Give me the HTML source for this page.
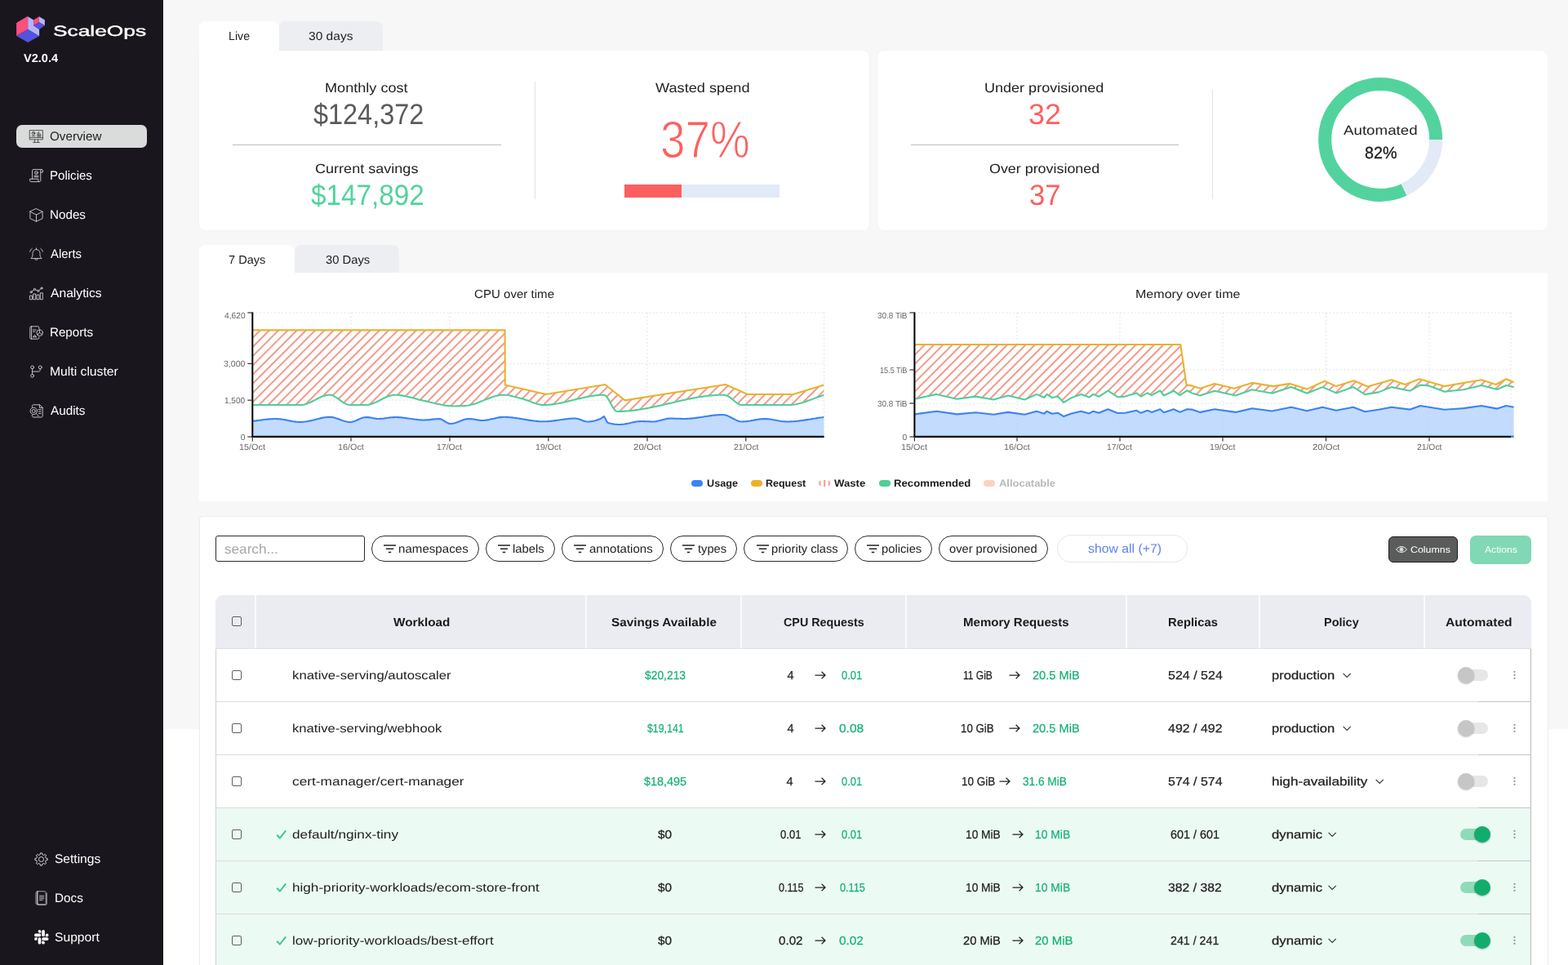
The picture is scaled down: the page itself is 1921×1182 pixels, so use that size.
<!DOCTYPE html>
<html lang="en"><head><meta charset="utf-8"><title>ScaleOps</title>
<style>
*{box-sizing:border-box;margin:0;padding:0}
html,body{width:1921px;height:1182px;overflow:hidden;background:#fff}
body{position:relative;font-family:"Liberation Sans", sans-serif;color:#222}
.t{position:absolute;white-space:pre;line-height:1;transform-origin:0 50%;text-rendering:geometricPrecision}
.a{position:absolute}
#app{position:absolute;left:0;top:0;width:1921px;height:1182px;will-change:transform}
#bg{left:201px;top:0;width:1720px;height:893px;background:#f7f7f7}
#side{left:0;top:0;width:200px;height:1182px;background:#19171d}
.card{background:#fff;border-radius:8px;box-shadow:0 0 2px rgba(0,0,0,.05)}
.tab{border-radius:8px 8px 0 0}
.chip{border:1px solid #2b2b2b;border-radius:16px;height:32px;top:656px;background:#fff}
.cb{width:12px;height:12px;border:1px solid #5e5e5e;border-radius:2px;background:transparent}
.row{left:264px;width:1612px;height:65px;border-left:1px solid #cfcfcf;border-right:1px solid #b9b9b9;border-bottom:1px solid #dcdcdc;background:#fff}
.row.g{background:#ecfaf4}
.sep{top:729px;width:2px;height:65px;background:#f9fafc}
svg{position:absolute;overflow:visible}
</style></head>
<body>
<div id="app">
<div id="bg" class="a"></div>
<div id="side" class="a"></div>
<svg style="left:19px;top:19px" width="37" height="34" viewBox="0 0 37 34">
<polygon points="1.1,9.1 14.6,1 15.2,1.3 15.2,17.1 1.1,25" fill="#fb4f7e"/>
<polygon points="15.2,1.3 22.1,5.6 22.1,12.2 29.1,16.9 29.1,25.2 15.2,17.1" fill="#b6b3fd"/>
<polygon points="1.1,25 15.2,17.1 29.1,25.2 15.2,33" fill="#5452e0"/>
<polygon points="22.1,5.6 28.9,1.2 28.9,8.3 22.1,12.2" fill="#fb4f7e"/>
<polygon points="28.9,1.2 35.9,5.4 35.9,12.2 28.9,8.3" fill="#b6b3fd"/>
<polygon points="22.1,12.2 28.9,8.3 35.9,12.2 29.1,16.9" fill="#5452e0"/>
</svg>
<div class="t" style="left:64.92px;top:30px;font-size:17.9px;transform:scaleX(1.4703);color:#fff;-webkit-text-stroke:0.4px #fff;">ScaleOps</div>
<div class="t" style="left:28.56px;top:65px;font-size:14.3px;transform:scaleX(1.0165);font-weight:700;color:#fff;">V2.0.4</div>
<div class="a" style="left:20px;top:153px;width:160px;height:28px;border-radius:7px;background:#dadbdb"></div>
<svg style="left:36px;top:158.5px" width="17" height="17" viewBox="0 0 17 17" fill="none" stroke="#444" stroke-width="0.900" stroke-linejoin="round" stroke-linecap="round"><rect x="0.6" y="0.6" width="15.8" height="11.3"/><path d="M0.6 9.6H16.4M6.5 12v3M10.5 12v3M4.6 15.4h7.8"/><circle cx="5" cy="4.3" r="1.9"/><path d="M5 3.2v1.3h1M3 7.7h4M10 6.8V3.4M11.6 6.8V2.6M13.2 6.8V4.6M9.6 6.9h4.6M9.8 8.2h4"/></svg>
<div class="t" style="left:61.30px;top:160px;font-size:15.3px;transform:scaleX(0.9950);">Overview</div>
<svg style="left:36px;top:206.5px" width="17" height="17" viewBox="0 0 17 17" fill="none" stroke="#d2d2d2" stroke-width="0.900" stroke-linejoin="round" stroke-linecap="round"><path d="M3.6 12.2V1.8c0-.8.6-1.2 1.2-1.2h10.4c.8 0 1.2.6 1.2 1.2v2.2h-2.6V14c0 1-.6 1.6-1.5 1.6H2c-.9 0-1.4-.6-1.4-1.5v-1.9h10.3V14c0 .9.5 1.5 1.3 1.5M13.8 4V1.8c0-.7.5-1.2 1.2-1.2"/><circle cx="8.5" cy="4.6" r="2"/><path d="M7.9 4.7l.5.5.9-1M6 8.4h5M6 9.9h5"/></svg>
<div class="t" style="left:61.32px;top:208px;font-size:15.3px;transform:scaleX(0.9842);color:#fff;">Policies</div>
<svg style="left:36px;top:254.5px" width="17" height="17" viewBox="0 0 17 17" fill="none" stroke="#d2d2d2" stroke-width="0.900" stroke-linejoin="round" stroke-linecap="round"><path d="M8.5 0.7l7.6 3.6v8.3l-7.6 3.7-7.6-3.7V4.3zM0.9 4.3l7.6 3.8 7.6-3.8M8.5 8.1v8.2"/></svg>
<div class="t" style="left:61.23px;top:256px;font-size:15.3px;transform:scaleX(0.9940);color:#fff;">Nodes</div>
<svg style="left:36px;top:302.5px" width="17" height="17" viewBox="0 0 17 17" fill="none" stroke="#d2d2d2" stroke-width="0.900" stroke-linejoin="round" stroke-linecap="round"><path d="M2.2 13.3c1.3-1.2 1.8-2.6 1.8-4.6V7.4C4 4.6 5.9 2.6 8.5 2.6s4.500 2 4.500 4.800v1.300c0 2 .5 3.400 1.800 4.600zM6.700 13.500c0 1.100.8 1.900 1.800 1.900s1.800-.8 1.800-1.900M8.500 2.600V.9M3.300 1.300C1.900 2.300 1 3.700.7 5.300M13.700 1.300c1.400 1 2.300 2.400 2.600 4"/></svg>
<div class="t" style="left:62.27px;top:304px;font-size:15.3px;transform:scaleX(0.9724);color:#fff;">Alerts</div>
<svg style="left:36px;top:350.5px" width="17" height="17" viewBox="0 0 17 17" fill="none" stroke="#d2d2d2" stroke-width="0.900" stroke-linejoin="round" stroke-linecap="round"><rect x="0.8" y="11.200" width="2.600" height="4.600"/><rect x="5.100" y="9" width="2.600" height="6.800"/><rect x="9.400" y="10.200" width="2.600" height="5.600"/><rect x="13.700" y="7.800" width="2.600" height="8"/><circle cx="2.100" cy="6.800" r="1.100"/><circle cx="6.400" cy="3.300" r="1.100"/><circle cx="10.700" cy="5.400" r="1.100"/><circle cx="15" cy="2" r="1.100"/><path d="M2.900 6.100l2.700-2.100M7.400 3.800l2.300 1.100M11.600 4.700l2.600-2.100"/></svg>
<div class="t" style="left:62.23px;top:352px;font-size:15.3px;transform:scaleX(1.0233);color:#fff;">Analytics</div>
<svg style="left:36px;top:398.5px" width="17" height="17" viewBox="0 0 17 17" fill="none" stroke="#d2d2d2" stroke-width="0.900" stroke-linejoin="round" stroke-linecap="round"><path d="M11.800 3.800V2.200c0-.8-.6-1.400-1.400-1.400H2.200C1.400.8.800 1.400.800 2.200v12.600c0 .8.600 1.400 1.400 1.400h8.200c.8 0 1.400-.6 1.400-1.400v-1.300M2.600.8v15.400"/><circle cx="12.600" cy="8.600" r="3.700"/><path d="M12.600 4.900v3.700l2.800 2.300M12.600 8.600l-3 2.100M4.500 5h3.600M4.500 7.200h2.600M4.500 13.800h4.200M5 13.600l1.600-2.400 1.500 2.400"/></svg>
<div class="t" style="left:61.31px;top:400px;font-size:15.3px;transform:scaleX(0.9904);color:#fff;">Reports</div>
<svg style="left:36px;top:446.5px" width="17" height="17" viewBox="0 0 17 17" fill="none" stroke="#d2d2d2" stroke-width="0.900" stroke-linejoin="round" stroke-linecap="round"><circle cx="3.600" cy="2.900" r="1.900"/><circle cx="3.600" cy="13.300" r="1.900"/><circle cx="13.200" cy="2.900" r="1.900"/><path d="M3.600 4.800v6.600M13.200 4.800v1.400c0 1-.8 1.900-1.900 1.900H3.600"/></svg>
<div class="t" style="left:61.03px;top:448px;font-size:15.3px;transform:scaleX(1.0269);color:#fff;">Multi cluster</div>
<svg style="left:36px;top:494.5px" width="17" height="17" viewBox="0 0 17 17" fill="none" stroke="#d2d2d2" stroke-width="0.900" stroke-linejoin="round" stroke-linecap="round"><path d="M3.400 3.600V2.400c0-.9.700-1.600 1.600-1.600h7.600l3.600 3.400v10.200c0 .9-.7 1.600-1.600 1.600H5c-.9 0-1.600-.7-1.600-1.600v-1M12.400.8v3.600h3.800M11 6.600h3.200M11.400 9h2.800M11.400 11.400h2.800"/><circle cx="5.300" cy="8.400" r="4.200"/><circle cx="5.300" cy="8.400" r="2"/><path d="M8.300 11.500l3 3.200"/></svg>
<div class="t" style="left:62.16px;top:496px;font-size:15.3px;transform:scaleX(0.9992);color:#fff;">Audits</div>
<svg style="left:42px;top:1043.500px" width="17" height="17" viewBox="0 0 17 17" fill="none" stroke="#d8d8d8" stroke-width="1" stroke-linejoin="round"><path d="M14.24 7.12L16.13 7.47L16.13 9.53L14.24 9.88L13.53 11.58L14.62 13.17L13.17 14.62L11.58 13.53L9.88 14.24L9.53 16.13L7.47 16.13L7.12 14.24L5.42 13.53L3.83 14.62L2.38 13.17L3.47 11.58L2.76 9.88L0.87 9.53L0.87 7.47L2.76 7.12L3.47 5.42L2.38 3.83L3.83 2.38L5.42 3.47L7.12 2.76L7.47 0.87L9.53 0.87L9.88 2.76L11.58 3.47L13.17 2.38L14.62 3.83L13.53 5.42Z"/><circle cx="8.500" cy="8.500" r="3"/></svg>
<svg style="left:43px;top:1091px" width="16" height="18" viewBox="0 0 16 18" fill="none" stroke="#cfcfcf" stroke-width="0.800" stroke-linejoin="round" stroke-linecap="round"><path d="M3 .8h8.600c.9 0 1.600.7 1.600 1.600v12.800c0 .9-.7 1.600-1.600 1.600H3zM3 .8C1.700 1.200 1 2 1 3.200v12c0 .9.700 1.600 2 1.600M3 .8v16M14.200 3v13.400c0 .5-.4.900-.9.900H4M5.500 6.200h5.200M5.500 8h5.200M5.500 9.800h5.200M5.500 11.600h3.500"/></svg>
<svg style="left:42px;top:1139px" width="17.500" height="17.500" viewBox="0 0 24 24" fill="#fff"><path d="M5.040 15.170a2.530 2.530 0 0 1-2.520 2.520A2.530 2.530 0 0 1 0 15.170a2.530 2.530 0 0 1 2.520-2.520h2.520zm1.270 0a2.530 2.530 0 0 1 2.520-2.520 2.530 2.530 0 0 1 2.520 2.520v6.310A2.530 2.530 0 0 1 8.830 24a2.530 2.530 0 0 1-2.520-2.520zM8.830 5.040a2.530 2.530 0 0 1-2.520-2.520A2.530 2.530 0 0 1 8.830 0a2.530 2.530 0 0 1 2.520 2.520v2.520zm0 1.270a2.530 2.530 0 0 1 2.520 2.520 2.530 2.530 0 0 1-2.520 2.520H2.520A2.530 2.530 0 0 1 0 8.830a2.530 2.530 0 0 1 2.520-2.520zM18.960 8.830a2.530 2.530 0 0 1 2.520-2.520A2.530 2.530 0 0 1 24 8.830a2.530 2.530 0 0 1-2.520 2.520h-2.520zm-1.270 0a2.530 2.530 0 0 1-2.520 2.520 2.530 2.530 0 0 1-2.520-2.520V2.520A2.530 2.530 0 0 1 15.170 0a2.530 2.530 0 0 1 2.520 2.520zM15.170 18.960a2.530 2.530 0 0 1 2.520 2.520A2.530 2.530 0 0 1 15.170 24a2.530 2.530 0 0 1-2.520-2.520v-2.520zm0-1.270a2.530 2.530 0 0 1-2.520-2.520 2.530 2.530 0 0 1 2.520-2.520h6.310A2.530 2.530 0 0 1 24 15.170a2.530 2.530 0 0 1-2.520 2.520z"/></svg>
<div class="t" style="left:67.06px;top:1045px;font-size:15.3px;transform:scaleX(1.0165);color:#fff;">Settings</div>
<div class="t" style="left:66.76px;top:1093px;font-size:15.3px;transform:scaleX(0.9995);color:#fff;">Docs</div>
<div class="t" style="left:67.04px;top:1141px;font-size:15.3px;transform:scaleX(1.0238);color:#fff;">Support</div>
<div class="a tab" style="left:342px;top:26px;width:127px;height:36px;background:#edeef2"></div>
<div class="a card" style="left:244px;top:62px;width:821px;height:220px;border-top-left-radius:0"></div>
<div class="a card" style="left:1075px;top:62px;width:821px;height:220px"></div>
<div class="a tab" style="left:244px;top:26px;width:98px;height:40px;background:#fff"></div>
<div class="t" style="left:279.51px;top:38px;font-size:14.4px;transform:scaleX(0.9855);">Live</div>
<div class="t" style="left:378.01px;top:38px;font-size:14.4px;transform:scaleX(1.0802);">30 days</div>
<div class="t" style="left:397.60px;top:100px;font-size:16.3px;transform:scaleX(1.1122);">Monthly cost</div>
<div class="t" style="left:384.09px;top:123px;font-size:35.6px;transform:scaleX(0.9118);color:#5a5a5a;">$124,372</div>
<div class="a" style="left:285px;top:177px;width:328.500px;height:1px;background:#bdbdbd"></div>
<div class="t" style="left:386.22px;top:199px;font-size:16.3px;transform:scaleX(1.1089);">Current savings</div>
<div class="t" style="left:381.20px;top:222px;font-size:35.6px;transform:scaleX(0.9358);color:#52d39d;">$147,892</div>
<div class="a" style="left:654.500px;top:100px;width:1.500px;height:144px;background:#e2e2e2"></div>
<div class="t" style="left:803.03px;top:100px;font-size:16.3px;transform:scaleX(1.1169);">Wasted spend</div>
<div class="t" style="left:808.84px;top:139px;font-size:64px;transform:scaleX(0.8568);color:#ff5f5f;-webkit-text-stroke:1.2px #fff;">37%</div>
<div class="a" style="left:765px;top:226px;width:190px;height:16px;background:#e2eaf8"></div>
<div class="a" style="left:765px;top:226px;width:70px;height:16px;background:#fc5f5f"></div>
<div class="t" style="left:1206.27px;top:100px;font-size:16.3px;transform:scaleX(1.1071);">Under provisioned</div>
<div class="t" style="left:1260.22px;top:123px;font-size:35.5px;transform:scaleX(1.0084);color:#ff5f5f;">32</div>
<div class="a" style="left:1116px;top:177px;width:327.500px;height:1px;background:#bdbdbd"></div>
<div class="t" style="left:1212.20px;top:199px;font-size:16.3px;transform:scaleX(1.0982);">Over provisioned</div>
<div class="t" style="left:1261.24px;top:222px;font-size:35.5px;transform:scaleX(0.9777);color:#ff5f5f;">37</div>
<div class="a" style="left:1484.500px;top:110px;width:1.500px;height:134px;background:#e2e2e2"></div>
<svg style="left:0;top:0" width="1921" height="300"><circle cx="1691.2" cy="170.9" r="68" fill="none" stroke="#52d39d" stroke-width="16" stroke-dasharray="350.95 427.26" stroke-dashoffset="-76.61"/><circle cx="1691.2" cy="170.9" r="68" fill="none" stroke="#e2eaf8" stroke-width="16" stroke-dasharray="76.91 427.26"/></svg>
<div class="t" style="left:1646.01px;top:152px;font-size:16.3px;transform:scaleX(1.1506);">Automated</div>
<div class="t" style="left:1672.39px;top:178px;font-size:20.5px;transform:scaleX(0.9607);-webkit-text-stroke:0.35px #222;">82%</div>
<div class="a tab" style="left:361px;top:300px;width:128px;height:34px;background:#edeef2"></div>
<div class="a tab" style="left:244px;top:300px;width:117px;height:38px;background:#fff"></div>
<div class="a" style="left:244px;top:334px;width:1652px;height:280px;background:#fff"></div>
<div class="t" style="left:280.30px;top:312px;font-size:14.4px;transform:scaleX(1.0114);">7 Days</div>
<div class="t" style="left:398.61px;top:312px;font-size:14.4px;transform:scaleX(1.0278);">30 Days</div>
<div class="t" style="left:580.96px;top:354px;font-size:14.4px;transform:scaleX(1.0480);">CPU over time</div>
<div class="t" style="left:1390.58px;top:354px;font-size:14.4px;transform:scaleX(1.1153);">Memory over time</div>
<svg style="left:0;top:0" width="10" height="10"><defs><pattern id="hatch" width="7.950" height="7.950" patternUnits="userSpaceOnUse" patternTransform="translate(2.500 0) rotate(45)"><rect x="0" y="0" width="1.750" height="7.950" fill="#f28c7a"/></pattern></defs></svg>
<svg style="left:0;top:0" width="1921" height="620"><path d="M309.0 515.8L311.1 515.6L313.1 515.4L315.2 515.1L317.3 514.8L319.4 514.6L321.4 514.3L323.5 514.0L325.6 513.8L327.6 513.6L329.7 513.4L331.8 513.2L333.9 513.1L335.9 513.0L338.0 513.0L340.0 513.1L342.0 513.2L344.0 513.4L346.0 513.7L348.0 514.0L350.0 514.4L352.0 514.8L354.0 515.2L356.0 515.6L358.0 516.0L360.0 516.3L362.0 516.6L364.0 516.8L366.0 516.9L368.0 517.0L370.0 516.9L372.0 516.8L374.0 516.5L376.0 516.2L378.0 515.8L380.0 515.4L382.0 514.9L384.0 514.4L386.0 513.9L388.0 513.4L390.0 512.9L392.0 512.4L394.0 512.0L396.0 511.6L398.0 511.3L400.0 511.0L402.0 510.9L404.0 510.8L406.1 510.9L408.2 511.3L410.2 511.8L412.3 512.4L414.4 513.1L416.5 513.9L418.6 514.7L420.7 515.4L422.8 516.0L424.8 516.5L426.9 516.9L429.0 517.0L431.2 516.8L433.3 516.2L435.5 515.4L437.7 514.5L439.8 513.5L442.0 512.6L444.2 511.8L446.3 511.2L448.5 511.0L450.7 511.1L452.9 511.4L455.1 511.8L457.4 512.2L459.6 512.6L461.8 512.9L464.0 513.0L466.0 512.9L468.0 512.8L470.0 512.6L472.0 512.3L474.0 512.0L476.0 511.7L478.0 511.4L480.0 511.2L482.0 511.1L484.0 511.0L486.0 511.0L488.0 511.1L490.0 511.3L492.0 511.4L494.0 511.7L496.0 511.9L498.0 512.2L500.0 512.5L502.0 512.8L504.0 513.0L506.0 513.3L508.0 513.6L510.0 513.8L512.0 514.1L514.0 514.2L516.0 514.4L518.0 514.5L520.0 514.5L522.0 514.4L524.0 514.3L526.0 514.1L528.0 513.9L530.0 513.6L532.0 513.4L534.0 513.2L536.0 513.1L538.0 513.0L540.3 513.4L542.5 514.6L544.8 516.0L547.1 517.4L549.3 518.6L551.6 519.0L553.7 518.9L555.8 518.5L557.9 517.9L560.0 517.2L562.1 516.4L564.1 515.6L566.2 514.8L568.3 514.1L570.4 513.5L572.5 513.1L574.6 513.0L576.6 513.1L578.7 513.3L580.8 513.6L582.8 514.0L584.9 514.4L586.9 514.7L589.0 514.9L591.0 515.0L593.0 514.9L595.0 514.7L597.0 514.4L599.0 514.1L601.0 513.6L603.0 513.1L605.0 512.7L607.0 512.2L609.0 511.7L611.0 511.4L613.0 511.1L615.0 510.9L617.0 510.8L619.0 510.8L621.1 510.9L623.1 511.0L625.2 511.2L627.2 511.4L629.2 511.7L631.3 511.9L633.3 512.2L635.4 512.5L637.4 512.9L639.5 513.2L641.5 513.5L643.5 513.9L645.6 514.2L647.6 514.6L649.7 514.9L651.7 515.2L653.8 515.4L655.8 515.7L657.8 515.9L659.9 516.1L661.9 516.2L664.0 516.3L666.0 516.3L668.0 516.3L670.1 516.2L672.1 516.0L674.1 515.9L676.2 515.6L678.2 515.4L680.2 515.1L682.3 514.8L684.3 514.5L686.3 514.3L688.3 514.0L690.4 513.7L692.4 513.4L694.4 513.2L696.5 512.9L698.5 512.8L700.5 512.6L702.6 512.5L704.6 512.5L706.8 512.7L709.0 513.3L711.2 514.1L713.4 514.9L715.6 515.7L717.8 516.3L720.0 516.5L722.3 516.4L724.5 516.2L726.8 515.7L729.0 515.2L731.3 514.6L733.5 513.8L735.8 513.0L737.9 511.3L740.0 510.0L742.0 513.6L744.0 517.5L746.1 518.2L748.2 518.8L750.3 519.2L752.5 519.6L754.6 519.8L756.7 520.0L758.8 520.0L760.9 519.9L763.0 519.7L765.0 519.5L767.1 519.1L769.2 518.7L771.3 518.2L773.3 517.8L775.4 517.3L777.5 516.9L779.6 516.5L781.6 516.3L783.7 516.1L785.8 516.0L787.8 516.0L789.9 516.1L791.9 516.2L793.9 516.3L795.9 516.4L798.0 516.5L800.0 516.5L802.1 516.4L804.2 516.1L806.3 515.6L808.4 515.1L810.5 514.5L812.6 513.9L814.7 513.4L816.8 512.9L818.9 512.6L821.0 512.5L823.1 512.5L825.2 512.6L827.4 512.7L829.5 512.8L831.6 512.8L833.8 512.9L835.9 513.0L838.0 513.0L840.1 513.0L842.2 512.9L844.2 512.8L846.3 512.6L848.4 512.4L850.5 512.2L852.5 511.9L854.6 511.6L856.7 511.3L858.8 511.0L860.9 510.7L862.9 510.3L865.0 510.0L867.1 509.7L869.2 509.4L871.3 509.1L873.3 508.8L875.4 508.6L877.5 508.4L879.6 508.2L881.6 508.1L883.7 508.0L885.8 508.0L887.9 508.2L890.0 508.7L892.0 509.6L894.1 510.6L896.2 511.7L898.3 512.8L900.4 513.9L902.5 514.9L904.5 515.8L906.6 516.3L908.7 516.5L910.7 516.4L912.7 516.3L914.8 516.1L916.8 515.8L918.8 515.5L920.8 515.1L922.9 514.8L924.9 514.4L926.9 514.0L928.9 513.7L930.9 513.4L933.0 513.2L935.0 513.1L937.0 513.0L939.1 513.1L941.2 513.2L943.2 513.5L945.3 513.8L947.4 514.2L949.5 514.5L951.5 515.0L953.6 515.3L955.7 515.7L957.8 516.0L959.8 516.3L961.9 516.4L964.0 516.5L966.1 516.5L968.1 516.4L970.2 516.3L972.2 516.2L974.3 516.0L976.4 515.8L978.4 515.6L980.5 515.3L982.5 515.0L984.6 514.7L986.6 514.4L988.7 514.1L990.8 513.8L992.8 513.5L994.9 513.1L996.9 512.8L999.0 512.5L1001.1 512.1L1003.1 511.8L1005.2 511.5L1007.2 511.3L1009.3 511.0L1009.3 535L309.0 535Z" fill="#c3dbfd"/><line x1="430" y1="383" x2="430" y2="535" stroke="#cfcfd6" stroke-opacity="0.75" stroke-width="1" stroke-dasharray="1.500 3"/><line x1="551" y1="383" x2="551" y2="535" stroke="#cfcfd6" stroke-opacity="0.75" stroke-width="1" stroke-dasharray="1.500 3"/><line x1="671.9" y1="383" x2="671.9" y2="535" stroke="#cfcfd6" stroke-opacity="0.75" stroke-width="1" stroke-dasharray="1.500 3"/><line x1="793" y1="383" x2="793" y2="535" stroke="#cfcfd6" stroke-opacity="0.75" stroke-width="1" stroke-dasharray="1.500 3"/><line x1="913.8" y1="383" x2="913.8" y2="535" stroke="#cfcfd6" stroke-opacity="0.75" stroke-width="1" stroke-dasharray="1.500 3"/><line x1="1009.6" y1="383" x2="1009.6" y2="535" stroke="#cfcfd6" stroke-opacity="0.75" stroke-width="1" stroke-dasharray="1.500 3"/><line x1="309.3" y1="383" x2="1009.6" y2="383" stroke="#cfcfd6" stroke-opacity="0.75" stroke-width="1" stroke-dasharray="1.500 3"/><line x1="309.3" y1="445.4" x2="1009.6" y2="445.4" stroke="#cfcfd6" stroke-opacity="0.75" stroke-width="1" stroke-dasharray="1.500 3"/><line x1="309.3" y1="490.2" x2="1009.6" y2="490.2" stroke="#cfcfd6" stroke-opacity="0.75" stroke-width="1" stroke-dasharray="1.500 3"/><path d="M309.0 404.4L618.6 404.4L618.8 471.4L669.0 483.0L741.4 471.0L765.6 490.4L888.8 471.0L916.0 483.0L972.0 483.0L1009.3 471.4L1009.3 484.0L1007.3 484.6L1005.3 485.2L1003.3 485.9L1001.2 486.6L999.2 487.4L997.2 488.1L995.2 488.9L993.2 489.6L991.2 490.4L989.2 491.1L987.1 491.9L985.1 492.5L983.1 493.2L981.1 493.8L979.1 494.3L977.1 494.8L975.1 495.2L973.0 495.5L971.0 495.8L969.0 495.9L967.0 496.0L965.0 496.0L963.0 496.0L961.0 496.0L959.0 496.0L956.9 496.0L954.9 496.0L952.9 496.0L950.9 496.0L948.9 496.0L946.9 496.0L944.9 496.0L942.9 496.0L940.9 496.0L938.9 496.0L936.8 496.0L934.8 496.0L932.8 496.0L930.8 496.0L928.8 496.0L926.8 496.0L924.8 496.0L922.8 496.0L920.8 496.0L918.8 496.0L916.7 496.0L914.7 496.0L912.7 496.0L910.7 496.0L908.7 496.0L906.6 495.7L904.5 494.7L902.5 493.4L900.4 491.7L898.3 490.0L896.2 488.2L894.2 486.6L892.1 485.3L890.0 484.5L887.9 484.0L885.8 483.7L883.8 483.7L881.7 483.8L879.7 483.8L877.7 483.9L875.7 484.1L873.6 484.2L871.6 484.4L869.6 484.6L867.5 484.8L865.5 485.0L863.5 485.3L861.5 485.6L859.4 485.9L857.4 486.2L855.4 486.5L853.3 486.9L851.3 487.2L849.3 487.6L847.3 488.0L845.2 488.4L843.2 488.8L841.2 489.2L839.2 489.7L837.1 490.1L835.1 490.6L833.1 491.0L831.0 491.5L829.0 492.0L827.0 492.4L825.0 492.9L822.9 493.4L820.9 493.9L818.9 494.3L816.8 494.8L814.8 495.3L812.8 495.7L810.8 496.2L808.7 496.7L806.7 497.1L804.7 497.6L802.6 498.0L800.6 498.5L798.6 498.9L796.6 499.3L794.5 499.7L792.5 500.1L790.5 500.5L788.5 500.8L786.4 501.2L784.4 501.5L782.4 501.8L780.3 502.1L778.3 502.4L776.3 502.7L774.3 502.9L772.2 503.1L770.2 503.3L768.2 503.5L766.1 503.6L764.1 503.8L762.1 503.9L760.1 503.9L758.0 504.0L756.0 504.0L754.0 503.1L752.0 500.8L750.0 497.6L748.0 493.9L746.0 490.1L744.0 486.9L742.0 484.6L740.0 483.7L738.0 483.7L736.0 483.8L734.0 483.9L732.0 484.1L730.0 484.3L728.0 484.6L726.0 484.9L724.0 485.2L722.0 485.5L720.0 485.9L718.0 486.3L716.0 486.7L714.0 487.2L712.0 487.7L710.0 488.1L708.0 488.6L706.0 489.1L704.0 489.6L702.0 490.1L700.0 490.6L698.0 491.1L696.0 491.6L694.0 492.0L692.0 492.5L690.0 493.0L688.0 493.4L686.0 493.8L684.0 494.2L682.0 494.5L680.0 494.8L678.0 495.1L676.0 495.4L674.0 495.6L672.0 495.8L670.0 495.9L668.0 496.0L666.0 496.0L664.0 495.9L662.0 495.6L660.0 495.2L658.0 494.7L656.0 494.1L654.0 493.4L652.0 492.7L650.0 491.9L648.0 491.1L646.0 490.4L644.0 489.7L642.0 489.0L640.0 488.5L637.9 488.0L635.8 487.4L633.7 486.8L631.6 486.2L629.5 485.7L627.5 485.1L625.4 484.7L623.3 484.3L621.2 484.0L619.1 483.8L617.0 483.7L615.0 483.8L612.9 484.0L610.9 484.3L608.8 484.7L606.8 485.2L604.7 485.8L602.7 486.5L600.7 487.2L598.6 488.0L596.6 488.8L594.5 489.6L592.5 490.4L590.4 491.3L588.4 492.1L586.3 492.9L584.3 493.7L582.3 494.4L580.2 495.0L578.2 495.6L576.1 496.1L574.1 496.5L572.0 496.8L570.0 497.0L568.0 497.1L565.9 497.2L563.9 497.3L561.9 497.4L559.9 497.4L557.8 497.5L555.8 497.5L553.7 497.5L551.6 497.3L549.5 497.1L547.4 496.9L545.3 496.6L543.2 496.2L541.1 495.8L539.0 495.3L536.8 494.9L534.7 494.4L532.6 493.9L530.5 493.4L528.4 492.9L526.3 492.4L524.2 491.9L522.1 491.4L520.0 491.0L518.0 490.6L516.0 490.1L514.0 489.7L512.0 489.2L510.0 488.6L508.0 488.1L506.0 487.5L504.0 487.0L501.9 486.5L499.9 486.0L497.9 485.5L495.9 485.1L493.9 484.7L491.9 484.4L489.9 484.1L487.9 483.9L485.9 483.7L483.9 483.7L481.8 483.8L479.7 484.2L477.6 484.7L475.5 485.4L473.5 486.3L471.4 487.2L469.3 488.2L467.2 489.3L465.1 490.4L463.0 491.5L460.9 492.5L458.8 493.4L456.8 494.3L454.7 495.0L452.6 495.5L450.5 495.9L448.4 496.0L446.2 496.0L444.0 496.0L441.8 496.0L439.6 496.0L437.5 496.0L435.3 496.0L433.1 496.0L430.9 496.0L428.7 496.0L426.6 495.8L424.5 495.1L422.4 494.1L420.4 492.8L418.3 491.4L416.2 489.9L414.1 488.3L412.0 486.9L409.9 485.6L407.9 484.6L405.8 483.9L403.7 483.7L401.6 483.8L399.5 484.2L397.5 484.7L395.4 485.4L393.3 486.3L391.2 487.2L389.1 488.2L387.0 489.3L385.0 490.4L382.9 491.5L380.8 492.5L378.7 493.4L376.6 494.3L374.5 495.0L372.5 495.5L370.4 495.9L368.3 496.0L366.3 496.0L364.2 496.0L362.2 496.0L360.1 496.0L358.1 496.0L356.0 496.0L354.0 496.0L351.9 496.0L349.9 496.0L347.9 496.0L345.8 496.0L343.8 496.0L341.7 496.0L339.7 496.0L337.6 496.0L335.6 496.0L333.5 496.0L331.5 496.0L329.4 496.0L327.4 496.0L325.4 496.0L323.3 496.0L321.3 496.0L319.2 496.0L317.2 496.0L315.1 496.0L313.1 496.0L311.0 496.0L309.0 496.0Z" fill="url(#hatch)"/><path d="M309.0 496.0L311.0 496.0L313.1 496.0L315.1 496.0L317.2 496.0L319.2 496.0L321.3 496.0L323.3 496.0L325.4 496.0L327.4 496.0L329.4 496.0L331.5 496.0L333.5 496.0L335.6 496.0L337.6 496.0L339.7 496.0L341.7 496.0L343.8 496.0L345.8 496.0L347.9 496.0L349.9 496.0L351.9 496.0L354.0 496.0L356.0 496.0L358.1 496.0L360.1 496.0L362.2 496.0L364.2 496.0L366.3 496.0L368.3 496.0L370.4 495.9L372.5 495.5L374.5 495.0L376.6 494.3L378.7 493.4L380.8 492.5L382.9 491.5L385.0 490.4L387.0 489.3L389.1 488.2L391.2 487.2L393.3 486.3L395.4 485.4L397.5 484.7L399.5 484.2L401.6 483.8L403.7 483.7L405.8 483.9L407.9 484.6L409.9 485.6L412.0 486.9L414.1 488.3L416.2 489.9L418.3 491.4L420.4 492.8L422.4 494.1L424.5 495.1L426.6 495.8L428.7 496.0L430.9 496.0L433.1 496.0L435.3 496.0L437.5 496.0L439.6 496.0L441.8 496.0L444.0 496.0L446.2 496.0L448.4 496.0L450.5 495.9L452.6 495.5L454.7 495.0L456.8 494.3L458.8 493.4L460.9 492.5L463.0 491.5L465.1 490.4L467.2 489.3L469.3 488.2L471.4 487.2L473.5 486.3L475.5 485.4L477.6 484.7L479.7 484.2L481.8 483.8L483.9 483.7L485.9 483.7L487.9 483.9L489.9 484.1L491.9 484.4L493.9 484.7L495.9 485.1L497.9 485.5L499.9 486.0L501.9 486.5L504.0 487.0L506.0 487.5L508.0 488.1L510.0 488.6L512.0 489.2L514.0 489.7L516.0 490.1L518.0 490.6L520.0 491.0L522.1 491.4L524.2 491.9L526.3 492.4L528.4 492.9L530.5 493.4L532.6 493.9L534.7 494.4L536.8 494.9L539.0 495.3L541.1 495.8L543.2 496.2L545.3 496.6L547.4 496.9L549.5 497.1L551.6 497.3L553.7 497.5L555.8 497.5L557.8 497.5L559.9 497.4L561.9 497.4L563.9 497.3L565.9 497.2L568.0 497.1L570.0 497.0L572.0 496.8L574.1 496.5L576.1 496.1L578.2 495.6L580.2 495.0L582.3 494.4L584.3 493.7L586.3 492.9L588.4 492.1L590.4 491.3L592.5 490.4L594.5 489.6L596.6 488.8L598.6 488.0L600.7 487.2L602.7 486.5L604.7 485.8L606.8 485.2L608.8 484.7L610.9 484.3L612.9 484.0L615.0 483.8L617.0 483.7L619.1 483.8L621.2 484.0L623.3 484.3L625.4 484.7L627.5 485.1L629.5 485.7L631.6 486.2L633.7 486.8L635.8 487.4L637.9 488.0L640.0 488.5L642.0 489.0L644.0 489.7L646.0 490.4L648.0 491.1L650.0 491.9L652.0 492.7L654.0 493.4L656.0 494.1L658.0 494.7L660.0 495.2L662.0 495.6L664.0 495.9L666.0 496.0L668.0 496.0L670.0 495.9L672.0 495.8L674.0 495.6L676.0 495.4L678.0 495.1L680.0 494.8L682.0 494.5L684.0 494.2L686.0 493.8L688.0 493.4L690.0 493.0L692.0 492.5L694.0 492.0L696.0 491.6L698.0 491.1L700.0 490.6L702.0 490.1L704.0 489.6L706.0 489.1L708.0 488.6L710.0 488.1L712.0 487.7L714.0 487.2L716.0 486.7L718.0 486.3L720.0 485.9L722.0 485.5L724.0 485.2L726.0 484.9L728.0 484.6L730.0 484.3L732.0 484.1L734.0 483.9L736.0 483.8L738.0 483.7L740.0 483.7L742.0 484.6L744.0 486.9L746.0 490.1L748.0 493.9L750.0 497.6L752.0 500.8L754.0 503.1L756.0 504.0L758.0 504.0L760.1 503.9L762.1 503.9L764.1 503.8L766.1 503.6L768.2 503.5L770.2 503.3L772.2 503.1L774.3 502.9L776.3 502.7L778.3 502.4L780.3 502.1L782.4 501.8L784.4 501.5L786.4 501.2L788.5 500.8L790.5 500.5L792.5 500.1L794.5 499.7L796.6 499.3L798.6 498.9L800.6 498.5L802.6 498.0L804.7 497.6L806.7 497.1L808.7 496.7L810.8 496.2L812.8 495.7L814.8 495.3L816.8 494.8L818.9 494.3L820.9 493.9L822.9 493.4L825.0 492.9L827.0 492.4L829.0 492.0L831.0 491.5L833.1 491.0L835.1 490.6L837.1 490.1L839.2 489.7L841.2 489.2L843.2 488.8L845.2 488.4L847.3 488.0L849.3 487.6L851.3 487.2L853.3 486.9L855.4 486.5L857.4 486.2L859.4 485.9L861.5 485.6L863.5 485.3L865.5 485.0L867.5 484.8L869.6 484.6L871.6 484.4L873.6 484.2L875.7 484.1L877.7 483.9L879.7 483.8L881.7 483.8L883.8 483.7L885.8 483.7L887.9 484.0L890.0 484.5L892.1 485.3L894.2 486.6L896.2 488.2L898.3 490.0L900.4 491.7L902.5 493.4L904.5 494.7L906.6 495.7L908.7 496.0L910.7 496.0L912.7 496.0L914.7 496.0L916.7 496.0L918.8 496.0L920.8 496.0L922.8 496.0L924.8 496.0L926.8 496.0L928.8 496.0L930.8 496.0L932.8 496.0L934.8 496.0L936.8 496.0L938.9 496.0L940.9 496.0L942.9 496.0L944.9 496.0L946.9 496.0L948.9 496.0L950.9 496.0L952.9 496.0L954.9 496.0L956.9 496.0L959.0 496.0L961.0 496.0L963.0 496.0L965.0 496.0L967.0 496.0L969.0 495.9L971.0 495.8L973.0 495.5L975.1 495.2L977.1 494.8L979.1 494.3L981.1 493.8L983.1 493.2L985.1 492.5L987.1 491.9L989.2 491.1L991.2 490.4L993.2 489.6L995.2 488.9L997.2 488.1L999.2 487.4L1001.2 486.6L1003.3 485.9L1005.3 485.2L1007.3 484.6L1009.3 484.0" fill="none" stroke="#4fce98" stroke-width="2.100" stroke-linejoin="round"/><path d="M309.0 404.4L618.6 404.4L618.8 471.4L669.0 483.0L741.4 471.0L765.6 490.4L888.8 471.0L916.0 483.0L972.0 483.0L1009.3 471.4" fill="none" stroke="#eab22e" stroke-width="2.100" stroke-linejoin="round"/><path d="M309.0 515.8L311.1 515.6L313.1 515.4L315.2 515.1L317.3 514.8L319.4 514.6L321.4 514.3L323.5 514.0L325.6 513.8L327.6 513.6L329.7 513.4L331.8 513.2L333.9 513.1L335.9 513.0L338.0 513.0L340.0 513.1L342.0 513.2L344.0 513.4L346.0 513.7L348.0 514.0L350.0 514.4L352.0 514.8L354.0 515.2L356.0 515.6L358.0 516.0L360.0 516.3L362.0 516.6L364.0 516.8L366.0 516.9L368.0 517.0L370.0 516.9L372.0 516.8L374.0 516.5L376.0 516.2L378.0 515.8L380.0 515.4L382.0 514.9L384.0 514.4L386.0 513.9L388.0 513.4L390.0 512.9L392.0 512.4L394.0 512.0L396.0 511.6L398.0 511.3L400.0 511.0L402.0 510.9L404.0 510.8L406.1 510.9L408.2 511.3L410.2 511.8L412.3 512.4L414.4 513.1L416.5 513.9L418.6 514.7L420.7 515.4L422.8 516.0L424.8 516.5L426.9 516.9L429.0 517.0L431.2 516.8L433.3 516.2L435.5 515.4L437.7 514.5L439.8 513.5L442.0 512.6L444.2 511.8L446.3 511.2L448.5 511.0L450.7 511.1L452.9 511.4L455.1 511.8L457.4 512.2L459.6 512.6L461.8 512.9L464.0 513.0L466.0 512.9L468.0 512.8L470.0 512.6L472.0 512.3L474.0 512.0L476.0 511.7L478.0 511.4L480.0 511.2L482.0 511.1L484.0 511.0L486.0 511.0L488.0 511.1L490.0 511.3L492.0 511.4L494.0 511.7L496.0 511.9L498.0 512.2L500.0 512.5L502.0 512.8L504.0 513.0L506.0 513.3L508.0 513.6L510.0 513.8L512.0 514.1L514.0 514.2L516.0 514.4L518.0 514.5L520.0 514.5L522.0 514.4L524.0 514.3L526.0 514.1L528.0 513.9L530.0 513.6L532.0 513.4L534.0 513.2L536.0 513.1L538.0 513.0L540.3 513.4L542.5 514.6L544.8 516.0L547.1 517.4L549.3 518.6L551.6 519.0L553.7 518.9L555.8 518.5L557.9 517.9L560.0 517.2L562.1 516.4L564.1 515.6L566.2 514.8L568.3 514.1L570.4 513.5L572.5 513.1L574.6 513.0L576.6 513.1L578.7 513.3L580.8 513.6L582.8 514.0L584.9 514.4L586.9 514.7L589.0 514.9L591.0 515.0L593.0 514.9L595.0 514.7L597.0 514.4L599.0 514.1L601.0 513.6L603.0 513.1L605.0 512.7L607.0 512.2L609.0 511.7L611.0 511.4L613.0 511.1L615.0 510.9L617.0 510.8L619.0 510.8L621.1 510.9L623.1 511.0L625.2 511.2L627.2 511.4L629.2 511.7L631.3 511.9L633.3 512.2L635.4 512.5L637.4 512.9L639.5 513.2L641.5 513.5L643.5 513.9L645.6 514.2L647.6 514.6L649.7 514.9L651.7 515.2L653.8 515.4L655.8 515.7L657.8 515.9L659.9 516.1L661.9 516.2L664.0 516.3L666.0 516.3L668.0 516.3L670.1 516.2L672.1 516.0L674.1 515.9L676.2 515.6L678.2 515.4L680.2 515.1L682.3 514.8L684.3 514.5L686.3 514.3L688.3 514.0L690.4 513.7L692.4 513.4L694.4 513.2L696.5 512.9L698.5 512.8L700.5 512.6L702.6 512.5L704.6 512.5L706.8 512.7L709.0 513.3L711.2 514.1L713.4 514.9L715.6 515.7L717.8 516.3L720.0 516.5L722.3 516.4L724.5 516.2L726.8 515.7L729.0 515.2L731.3 514.6L733.5 513.8L735.8 513.0L737.9 511.3L740.0 510.0L742.0 513.6L744.0 517.5L746.1 518.2L748.2 518.8L750.3 519.2L752.5 519.6L754.6 519.8L756.7 520.0L758.8 520.0L760.9 519.9L763.0 519.7L765.0 519.5L767.1 519.1L769.2 518.7L771.3 518.2L773.3 517.8L775.4 517.3L777.5 516.9L779.6 516.5L781.6 516.3L783.7 516.1L785.8 516.0L787.8 516.0L789.9 516.1L791.9 516.2L793.9 516.3L795.9 516.4L798.0 516.5L800.0 516.5L802.1 516.4L804.2 516.1L806.3 515.6L808.4 515.1L810.5 514.5L812.6 513.9L814.7 513.4L816.8 512.9L818.9 512.6L821.0 512.5L823.1 512.5L825.2 512.6L827.4 512.7L829.5 512.8L831.6 512.8L833.8 512.9L835.9 513.0L838.0 513.0L840.1 513.0L842.2 512.9L844.2 512.8L846.3 512.6L848.4 512.4L850.5 512.2L852.5 511.9L854.6 511.6L856.7 511.3L858.8 511.0L860.9 510.7L862.9 510.3L865.0 510.0L867.1 509.7L869.2 509.4L871.3 509.1L873.3 508.8L875.4 508.6L877.5 508.4L879.6 508.2L881.6 508.1L883.7 508.0L885.8 508.0L887.9 508.2L890.0 508.7L892.0 509.6L894.1 510.6L896.2 511.7L898.3 512.8L900.4 513.9L902.5 514.9L904.5 515.8L906.6 516.3L908.7 516.5L910.7 516.4L912.7 516.3L914.8 516.1L916.8 515.8L918.8 515.5L920.8 515.1L922.9 514.8L924.9 514.4L926.9 514.0L928.9 513.7L930.9 513.4L933.0 513.2L935.0 513.1L937.0 513.0L939.1 513.1L941.2 513.2L943.2 513.5L945.3 513.8L947.4 514.2L949.5 514.5L951.5 515.0L953.6 515.3L955.7 515.7L957.8 516.0L959.8 516.3L961.9 516.4L964.0 516.5L966.1 516.5L968.1 516.4L970.2 516.3L972.2 516.2L974.3 516.0L976.4 515.8L978.4 515.6L980.5 515.3L982.5 515.0L984.6 514.7L986.6 514.4L988.7 514.1L990.8 513.8L992.8 513.5L994.9 513.1L996.9 512.8L999.0 512.5L1001.1 512.1L1003.1 511.8L1005.2 511.5L1007.2 511.3L1009.3 511.0" fill="none" stroke="#3b82f6" stroke-width="2.100" stroke-linejoin="round"/><line x1="309.3" y1="534.7" x2="1009.3" y2="534.7" stroke="#3b82f6" stroke-width="2.600"/><line x1="309.3" y1="382.5" x2="309.3" y2="536" stroke="#000" stroke-width="2"/><line x1="308.3" y1="535" x2="1009.6" y2="535" stroke="#000" stroke-width="2"/><line x1="309.3" y1="535" x2="309.3" y2="540.5" stroke="#333" stroke-width="1.200"/><line x1="430" y1="535" x2="430" y2="540.5" stroke="#333" stroke-width="1.200"/><line x1="551" y1="535" x2="551" y2="540.5" stroke="#333" stroke-width="1.200"/><line x1="671.9" y1="535" x2="671.9" y2="540.5" stroke="#333" stroke-width="1.200"/><line x1="793" y1="535" x2="793" y2="540.5" stroke="#333" stroke-width="1.200"/><line x1="913.8" y1="535" x2="913.8" y2="540.5" stroke="#333" stroke-width="1.200"/><line x1="303.3" y1="383" x2="309.3" y2="383" stroke="#333" stroke-width="1.200"/><line x1="303.3" y1="445.4" x2="309.3" y2="445.4" stroke="#333" stroke-width="1.200"/><line x1="303.3" y1="490.2" x2="309.3" y2="490.2" stroke="#333" stroke-width="1.200"/><line x1="303.3" y1="535" x2="309.3" y2="535" stroke="#333" stroke-width="1.200"/></svg>
<div class="t" style="left:292.92px;top:544px;font-size:10.3px;transform:scaleX(1.0530);color:#666;">15/Oct</div>
<div class="t" style="left:414.00px;top:544px;font-size:10.3px;transform:scaleX(1.0502);color:#666;">16/Oct</div>
<div class="t" style="left:535.17px;top:544px;font-size:10.3px;transform:scaleX(1.0186);color:#666;">17/Oct</div>
<div class="t" style="left:656.15px;top:544px;font-size:10.3px;transform:scaleX(1.0337);color:#666;">19/Oct</div>
<div class="t" style="left:776.00px;top:544px;font-size:10.3px;transform:scaleX(1.1158);color:#666;">20/Oct</div>
<div class="t" style="left:898.70px;top:544px;font-size:10.3px;transform:scaleX(1.0036);color:#666;">21/Oct</div>
<div class="t" style="left:274.88px;top:383px;font-size:10.3px;transform:scaleX(0.9929);color:#666;">4,620</div>
<div class="t" style="left:274.14px;top:442px;font-size:10.3px;transform:scaleX(1.0228);color:#666;">3,000</div>
<div class="t" style="left:275.01px;top:487px;font-size:10.3px;transform:scaleX(0.9703);color:#666;">1,500</div>
<div class="t" style="left:294.77px;top:532px;font-size:10.3px;color:#666;">0</div>
<svg style="left:0;top:0" width="1921" height="620"><path d="M1120.4 507.4L1147.5 503.7L1172.4 507.4L1195.3 505.3L1217.2 507.8L1234.9 504.9L1255.3 507.8L1269.9 503.7L1279.3 506.8L1282.4 503.7L1289.0 506.8L1296.3 505.8L1303.2 510.1L1312.0 506.8L1324.4 503.7L1334.4 506.4L1339.4 503.7L1346.3 505.8L1357.3 501.2L1369.2 506.0L1378.6 505.8L1392.5 502.8L1397.7 505.8L1405.7 502.8L1410.9 504.9L1421.3 501.2L1425.9 505.3L1437.9 501.2L1445.6 504.9L1454.2 501.2L1460.0 501.6L1470.4 504.9L1488.1 501.2L1513.7 504.9L1533.9 500.3L1558.3 503.5L1581.8 498.7L1601.2 503.3L1620.3 498.7L1637.0 502.8L1657.8 498.7L1672.4 504.3L1689.0 501.8L1704.7 498.7L1727.6 501.6L1740.1 497.0L1769.6 501.8L1793.2 500.1L1815.0 497.0L1834.2 500.6L1845.2 497.0L1854.6 498.7L1854.6 535L1120.4 535Z" fill="#c3dbfd"/><line x1="1246" y1="383" x2="1246" y2="535" stroke="#cfcfd6" stroke-opacity="0.75" stroke-width="1" stroke-dasharray="1.500 3"/><line x1="1372" y1="383" x2="1372" y2="535" stroke="#cfcfd6" stroke-opacity="0.75" stroke-width="1" stroke-dasharray="1.500 3"/><line x1="1498" y1="383" x2="1498" y2="535" stroke="#cfcfd6" stroke-opacity="0.75" stroke-width="1" stroke-dasharray="1.500 3"/><line x1="1624.5" y1="383" x2="1624.5" y2="535" stroke="#cfcfd6" stroke-opacity="0.75" stroke-width="1" stroke-dasharray="1.500 3"/><line x1="1751" y1="383" x2="1751" y2="535" stroke="#cfcfd6" stroke-opacity="0.75" stroke-width="1" stroke-dasharray="1.500 3"/><line x1="1851" y1="383" x2="1851" y2="535" stroke="#cfcfd6" stroke-opacity="0.75" stroke-width="1" stroke-dasharray="1.500 3"/><line x1="1120.4" y1="383" x2="1851" y2="383" stroke="#cfcfd6" stroke-opacity="0.75" stroke-width="1" stroke-dasharray="1.500 3"/><line x1="1120.4" y1="453" x2="1851" y2="453" stroke="#cfcfd6" stroke-opacity="0.75" stroke-width="1" stroke-dasharray="1.500 3"/><line x1="1120.4" y1="494" x2="1851" y2="494" stroke="#cfcfd6" stroke-opacity="0.75" stroke-width="1" stroke-dasharray="1.500 3"/><path d="M1120.4 422.0L1446.3 422.0L1453.5 471.4L1460.0 472.4L1470.4 475.8L1488.1 469.9L1512.1 475.8L1533.9 468.9L1559.9 473.1L1580.4 469.9L1601.2 476.6L1622.8 466.8L1637.0 473.1L1658.9 466.2L1675.5 473.5L1704.7 465.2L1721.3 471.0L1739.0 464.3L1769.6 473.1L1815.0 465.2L1832.7 471.0L1845.2 464.3L1854.6 468.3L1854.6 474.1L1845.2 472.0L1834.2 477.0L1815.0 472.0L1793.2 477.2L1769.6 479.7L1750.5 472.4L1740.1 471.6L1727.6 478.7L1704.7 474.1L1689.0 480.4L1672.4 483.1L1657.8 474.1L1637.0 481.4L1620.3 474.1L1601.2 481.8L1581.8 474.1L1558.3 481.8L1533.9 477.2L1513.7 484.5L1488.1 478.7L1470.4 484.5L1460.0 481.4L1454.2 478.3L1445.6 484.1L1437.9 478.7L1425.9 484.5L1421.3 478.3L1410.9 484.1L1405.7 481.4L1397.7 485.6L1392.5 481.4L1378.6 485.6L1369.2 486.2L1357.3 478.7L1346.3 485.8L1339.4 482.9L1334.4 486.6L1324.4 482.9L1312.0 487.6L1303.2 492.9L1296.3 485.8L1289.0 487.0L1282.4 482.9L1279.3 487.0L1269.9 482.9L1255.3 489.5L1234.9 484.5L1217.2 489.5L1195.3 485.6L1172.4 488.7L1147.5 482.9L1120.4 488.7Z" fill="url(#hatch)"/><path d="M1120.4 488.7L1147.5 482.9L1172.4 488.7L1195.3 485.6L1217.2 489.5L1234.9 484.5L1255.3 489.5L1269.9 482.9L1279.3 487.0L1282.4 482.9L1289.0 487.0L1296.3 485.8L1303.2 492.9L1312.0 487.6L1324.4 482.9L1334.4 486.6L1339.4 482.9L1346.3 485.8L1357.3 478.7L1369.2 486.2L1378.6 485.6L1392.5 481.4L1397.7 485.6L1405.7 481.4L1410.9 484.1L1421.3 478.3L1425.9 484.5L1437.9 478.7L1445.6 484.1L1454.2 478.3L1460.0 481.4L1470.4 484.5L1488.1 478.7L1513.7 484.5L1533.9 477.2L1558.3 481.8L1581.8 474.1L1601.2 481.8L1620.3 474.1L1637.0 481.4L1657.8 474.1L1672.4 483.1L1689.0 480.4L1704.7 474.1L1727.6 478.7L1740.1 471.6L1750.5 472.4L1769.6 479.7L1793.2 477.2L1815.0 472.0L1834.2 477.0L1845.2 472.0L1854.6 474.1" fill="none" stroke="#4fce98" stroke-width="2.100" stroke-linejoin="round"/><path d="M1120.4 422.0L1446.3 422.0L1453.5 471.4L1460.0 472.4L1470.4 475.8L1488.1 469.9L1512.1 475.8L1533.9 468.9L1559.9 473.1L1580.4 469.9L1601.2 476.6L1622.8 466.8L1637.0 473.1L1658.9 466.2L1675.5 473.5L1704.7 465.2L1721.3 471.0L1739.0 464.3L1769.6 473.1L1815.0 465.2L1832.7 471.0L1845.2 464.3L1854.6 468.3" fill="none" stroke="#eab22e" stroke-width="2.100" stroke-linejoin="round"/><path d="M1120.4 507.4L1147.5 503.7L1172.4 507.4L1195.3 505.3L1217.2 507.8L1234.9 504.9L1255.3 507.8L1269.9 503.7L1279.3 506.8L1282.4 503.7L1289.0 506.8L1296.3 505.8L1303.2 510.1L1312.0 506.8L1324.4 503.7L1334.4 506.4L1339.4 503.7L1346.3 505.8L1357.3 501.2L1369.2 506.0L1378.6 505.8L1392.5 502.8L1397.7 505.8L1405.7 502.8L1410.9 504.9L1421.3 501.2L1425.9 505.3L1437.9 501.2L1445.6 504.9L1454.2 501.2L1460.0 501.6L1470.4 504.9L1488.1 501.2L1513.7 504.9L1533.9 500.3L1558.3 503.5L1581.8 498.7L1601.2 503.3L1620.3 498.7L1637.0 502.8L1657.8 498.7L1672.4 504.3L1689.0 501.8L1704.7 498.7L1727.6 501.6L1740.1 497.0L1769.6 501.8L1793.2 500.1L1815.0 497.0L1834.2 500.6L1845.2 497.0L1854.6 498.7" fill="none" stroke="#3b82f6" stroke-width="2.100" stroke-linejoin="round"/><line x1="1120.4" y1="534.7" x2="1854.586153045289" y2="534.7" stroke="#3b82f6" stroke-width="2.600"/><line x1="1120.4" y1="382.5" x2="1120.4" y2="536" stroke="#000" stroke-width="2"/><line x1="1119.4" y1="535" x2="1851" y2="535" stroke="#000" stroke-width="2"/><line x1="1120.4" y1="535" x2="1120.4" y2="540.5" stroke="#333" stroke-width="1.200"/><line x1="1246" y1="535" x2="1246" y2="540.5" stroke="#333" stroke-width="1.200"/><line x1="1372" y1="535" x2="1372" y2="540.5" stroke="#333" stroke-width="1.200"/><line x1="1498" y1="535" x2="1498" y2="540.5" stroke="#333" stroke-width="1.200"/><line x1="1624.5" y1="535" x2="1624.5" y2="540.5" stroke="#333" stroke-width="1.200"/><line x1="1751" y1="535" x2="1751" y2="540.5" stroke="#333" stroke-width="1.200"/><line x1="1114.4" y1="383" x2="1120.4" y2="383" stroke="#333" stroke-width="1.200"/><line x1="1114.4" y1="453" x2="1120.4" y2="453" stroke="#333" stroke-width="1.200"/><line x1="1114.4" y1="494" x2="1120.4" y2="494" stroke="#333" stroke-width="1.200"/><line x1="1114.4" y1="535" x2="1120.4" y2="535" stroke="#333" stroke-width="1.200"/></svg>
<div class="t" style="left:1104.41px;top:544px;font-size:10.3px;transform:scaleX(1.0530);color:#666;">15/Oct</div>
<div class="t" style="left:1230.00px;top:544px;font-size:10.3px;transform:scaleX(1.0502);color:#666;">16/Oct</div>
<div class="t" style="left:1356.17px;top:544px;font-size:10.3px;transform:scaleX(1.0186);color:#666;">17/Oct</div>
<div class="t" style="left:1482.25px;top:544px;font-size:10.3px;transform:scaleX(1.0337);color:#666;">19/Oct</div>
<div class="t" style="left:1607.80px;top:544px;font-size:10.3px;transform:scaleX(1.1053);color:#666;">20/Oct</div>
<div class="t" style="left:1735.62px;top:544px;font-size:10.3px;transform:scaleX(1.0036);color:#666;">21/Oct</div>
<div class="t" style="left:1075.41px;top:383px;font-size:10.3px;transform:scaleX(0.9656);color:#666;">30.8 TiB</div>
<div class="t" style="left:1077.70px;top:450px;font-size:10.3px;transform:scaleX(0.8846);color:#666;">15.5 TiB</div>
<div class="t" style="left:1075.41px;top:491px;font-size:10.3px;transform:scaleX(0.9656);color:#666;">30.8 TiB</div>
<div class="t" style="left:1105.57px;top:532px;font-size:10.3px;color:#666;">0</div>
<div class="a" style="left:847px;top:588px;width:14px;height:8px;border-radius:4px;background:#3b82f6;opacity:1"></div>
<div class="t" style="left:865.80px;top:586px;font-size:12.3px;transform:scaleX(1.0305);font-weight:700;color:#1b1b1b;">Usage</div>
<div class="a" style="left:920px;top:588px;width:14px;height:8px;border-radius:4px;background:#eab22e;opacity:1"></div>
<div class="t" style="left:937.70px;top:586px;font-size:12.3px;transform:scaleX(1.0148);font-weight:700;color:#1b1b1b;">Request</div>
<svg style="left:1003.3px;top:588px;opacity:1" width="14" height="8"><rect width="14" height="8" rx="4" fill="#fff"/><g fill="#f5a397"><path d="M2.500 0.300A4 4 0 0 0 2.500 7.700z"/><rect x="6" y="0" width="2.300" height="8"/><path d="M11.800 0.300a4 4 0 0 1 0 7.400z"/></g></svg>
<div class="t" style="left:1021.80px;top:586px;font-size:12.3px;transform:scaleX(1.0717);font-weight:700;color:#1b1b1b;">Waste</div>
<div class="a" style="left:1076.5px;top:588px;width:14px;height:8px;border-radius:4px;background:#4fce98;opacity:1"></div>
<div class="t" style="left:1095.00px;top:586px;font-size:12.3px;transform:scaleX(1.0703);font-weight:700;color:#1b1b1b;">Recommended</div>
<div class="a" style="left:1205px;top:588px;width:14px;height:8px;border-radius:4px;background:#fbd3bd;opacity:1"></div>
<div class="t" style="left:1223.57px;top:586px;font-size:12.3px;transform:scaleX(1.0528);font-weight:700;color:#b9b9b9;">Allocatable</div>
<div class="a" style="left:243.500px;top:632px;width:1653px;height:560px;background:#fff;border:1px solid #ececec;border-radius:4px 4px 0 0"></div>
<div class="a" style="left:264px;top:656px;width:183px;height:32px;border:1px solid #2b2b2b;border-radius:3px;background:#fff"></div>
<div class="t" style="left:275.21px;top:665px;font-size:16.5px;transform:scaleX(1.0396);color:#a6a6a6;">search...</div>
<div class="a chip" style="left:455px;width:132px"></div>
<svg style="left:470.3px;top:666.800px" width="15" height="11" viewBox="0 0 15 11"><path d="M0 1h15M2.800 5.300h9.400M5.800 9.600h3.400" stroke="#222" stroke-width="1.500" fill="none"/></svg>
<div class="t" style="left:488.31px;top:666px;font-size:14.4px;transform:scaleX(1.0501);">namespaces</div>
<div class="a chip" style="left:595.3px;width:84.70000000000005px"></div>
<svg style="left:610.4px;top:666.800px" width="15" height="11" viewBox="0 0 15 11"><path d="M0 1h15M2.800 5.300h9.400M5.800 9.600h3.400" stroke="#222" stroke-width="1.500" fill="none"/></svg>
<div class="t" style="left:628.41px;top:666px;font-size:14.4px;transform:scaleX(1.0311);">labels</div>
<div class="a chip" style="left:688px;width:125px"></div>
<svg style="left:703.4px;top:666.800px" width="15" height="11" viewBox="0 0 15 11"><path d="M0 1h15M2.800 5.300h9.400M5.800 9.600h3.400" stroke="#222" stroke-width="1.500" fill="none"/></svg>
<div class="t" style="left:721.95px;top:666px;font-size:14.4px;transform:scaleX(1.0435);">annotations</div>
<div class="a chip" style="left:821px;width:82px"></div>
<svg style="left:836.2px;top:666.800px" width="15" height="11" viewBox="0 0 15 11"><path d="M0 1h15M2.800 5.300h9.400M5.800 9.600h3.400" stroke="#222" stroke-width="1.500" fill="none"/></svg>
<div class="t" style="left:854.96px;top:666px;font-size:14.4px;transform:scaleX(1.0202);">types</div>
<div class="a chip" style="left:911px;width:128.20000000000005px"></div>
<svg style="left:926.5px;top:666.800px" width="15" height="11" viewBox="0 0 15 11"><path d="M0 1h15M2.800 5.300h9.400M5.800 9.600h3.400" stroke="#222" stroke-width="1.500" fill="none"/></svg>
<div class="t" style="left:944.70px;top:666px;font-size:14.4px;transform:scaleX(1.0217);">priority class</div>
<div class="a chip" style="left:1047px;width:95px"></div>
<svg style="left:1062px;top:666.800px" width="15" height="11" viewBox="0 0 15 11"><path d="M0 1h15M2.800 5.300h9.400M5.800 9.600h3.400" stroke="#222" stroke-width="1.500" fill="none"/></svg>
<div class="t" style="left:1080.23px;top:666px;font-size:14.4px;transform:scaleX(1.0259);">policies</div>
<div class="a chip" style="left:1150px;width:134px"></div>
<div class="t" style="left:1163.32px;top:666px;font-size:14.4px;transform:scaleX(1.0191);">over provisioned</div>
<div class="a" style="left:1295px;top:655px;width:160px;height:34px;border:1px solid #e4e7ef;border-radius:17px;background:#fff"></div>
<div class="t" style="left:1332.94px;top:665px;font-size:15.4px;transform:scaleX(1.0269);color:#5f83f3;">show all (+7)</div>
<div class="a" style="left:1701px;top:657px;width:85px;height:32px;border:1px solid #1d1d1d;border-radius:6px;background:#5a5c5b"></div>
<svg style="left:1709.800px;top:668.500px" width="14" height="8" viewBox="0 0 14 8" fill="none" stroke="#fff" stroke-width="1"><path d="M0.600 4C2.200 1.800 4.400.600 7 .600s4.800 1.200 6.400 3.400C11.800 6.200 9.600 7.400 7 7.400S2.200 6.200.600 4z"/><circle cx="7" cy="4" r="2"/><circle cx="7" cy="4" r=".7" fill="#fff"/></svg>
<div class="t" style="left:1727.88px;top:669px;font-size:11.2px;transform:scaleX(1.1079);color:#fff;">Columns</div>
<div class="a" style="left:1801px;top:656px;width:75px;height:34.500px;border-radius:7px;background:#80d8b4"></div>
<div class="t" style="left:1818.75px;top:669px;font-size:11.2px;transform:scaleX(1.0854);color:#fff;">Actions</div>
<div class="a" style="left:264px;top:729px;width:1612px;height:66px;background:#ebecf2;border-radius:9px 9px 0 0;border-bottom:1px solid #dfe0e4"></div>
<div class="a sep" style="left:312px"></div>
<div class="a sep" style="left:717px"></div>
<div class="a sep" style="left:906.5px"></div>
<div class="a sep" style="left:1109px"></div>
<div class="a sep" style="left:1379px"></div>
<div class="a sep" style="left:1541.5px"></div>
<div class="a sep" style="left:1744px"></div>
<div class="a cb" style="left:284px;top:755px"></div>
<div class="t" style="left:481.79px;top:756px;font-size:14.4px;transform:scaleX(1.0637);font-weight:700;color:#1a1a1a;">Workload</div>
<div class="t" style="left:748.71px;top:756px;font-size:14.4px;transform:scaleX(1.0629);font-weight:700;color:#1a1a1a;">Savings Available</div>
<div class="t" style="left:959.80px;top:756px;font-size:14.4px;transform:scaleX(0.9944);font-weight:700;color:#1a1a1a;">CPU Requests</div>
<div class="t" style="left:1180.02px;top:756px;font-size:14.4px;transform:scaleX(1.0455);font-weight:700;color:#1a1a1a;">Memory Requests</div>
<div class="t" style="left:1431.20px;top:756px;font-size:14.4px;transform:scaleX(1.0288);font-weight:700;color:#1a1a1a;">Replicas</div>
<div class="t" style="left:1622.12px;top:756px;font-size:14.4px;transform:scaleX(1.0081);font-weight:700;color:#1a1a1a;">Policy</div>
<div class="t" style="left:1770.98px;top:756px;font-size:14.4px;transform:scaleX(1.0867);font-weight:700;color:#1a1a1a;">Automated</div>
<div class="a row" style="top:795px"></div>
<div class="a cb" style="left:284px;top:821px"></div>
<div class="t" style="left:358.11px;top:821px;font-size:14.5px;transform:scaleX(1.1557);">knative-serving/autoscaler</div>
<div class="t" style="left:789.89px;top:821px;font-size:14.5px;transform:scaleX(0.9553);color:#18b277;-webkit-text-stroke:0.25px #18b277;">$20,213</div>
<div class="t" style="left:964.43px;top:821px;font-size:14.5px;-webkit-text-stroke:0.25px #222;">4</div>
<svg style="left:998px;top:822.2px" width="14" height="10" viewBox="0 0 14 10"><path d="M0.500 5h12.500M8.600 0.800L13 5l-4.400 4.200" stroke="#222" stroke-width="1.250" fill="none"/></svg>
<div class="t" style="left:1031.08px;top:821px;font-size:14.5px;transform:scaleX(0.8917);color:#18b277;-webkit-text-stroke:0.25px #18b277;">0.01</div>
<div class="t" style="left:1179.54px;top:821px;font-size:14.5px;transform:scaleX(0.8288);-webkit-text-stroke:0.25px #222;">11 GiB</div>
<svg style="left:1236px;top:822.2px" width="14" height="10" viewBox="0 0 14 10"><path d="M0.500 5h12.500M8.600 0.800L13 5l-4.400 4.200" stroke="#222" stroke-width="1.250" fill="none"/></svg>
<div class="t" style="left:1265.25px;top:821px;font-size:14.5px;transform:scaleX(1.0071);color:#18b277;-webkit-text-stroke:0.25px #18b277;">20.5 MiB</div>
<div class="t" style="left:1431.08px;top:821px;font-size:14.5px;transform:scaleX(1.1053);-webkit-text-stroke:0.25px #222;">524 / 524</div>
<div class="t" style="left:1557.70px;top:821px;font-size:14.5px;transform:scaleX(1.1409);-webkit-text-stroke:0.25px #222;">production</div>
<svg style="left:1644.7px;top:824.2px" width="11" height="7" viewBox="0 0 11 7"><path d="M0.600 0.800l4.600 4.600 4.600-4.600" stroke="#333" stroke-width="1.100" fill="none"/></svg>
<div class="a" style="left:1789px;top:820.2px;width:34px;height:14px;border-radius:7px;background:#e6e6e6"></div>
<div class="a" style="left:1786px;top:817.2px;width:20px;height:20px;border-radius:10px;background:#c6c6c6;box-shadow:0 1px 2px rgba(0,0,0,.25)"></div>
<svg style="left:1853.500px;top:821.2px" width="3" height="12" viewBox="0 0 3 12" fill="#858585"><rect x="0.600" y="0.900" width="1.800" height="1.800"/><rect x="0.600" y="4.900" width="1.800" height="1.800"/><rect x="0.600" y="8.900" width="1.800" height="1.800"/></svg>
<div class="a" style="left:1811px;top:859px;width:64px;height:1px;background:#c4c4c4"></div>
<div class="a row" style="top:860px"></div>
<div class="a cb" style="left:284px;top:886px"></div>
<div class="t" style="left:358.26px;top:886px;font-size:14.5px;transform:scaleX(1.1481);">knative-serving/webhook</div>
<div class="t" style="left:792.73px;top:886px;font-size:14.5px;transform:scaleX(0.8513);color:#18b277;-webkit-text-stroke:0.25px #18b277;">$19,141</div>
<div class="t" style="left:964.43px;top:886px;font-size:14.5px;-webkit-text-stroke:0.25px #222;">4</div>
<svg style="left:998px;top:887.2px" width="14" height="10" viewBox="0 0 14 10"><path d="M0.500 5h12.500M8.600 0.800L13 5l-4.400 4.200" stroke="#222" stroke-width="1.250" fill="none"/></svg>
<div class="t" style="left:1028.45px;top:886px;font-size:14.5px;transform:scaleX(1.0675);color:#18b277;-webkit-text-stroke:0.25px #18b277;">0.08</div>
<div class="t" style="left:1176.82px;top:886px;font-size:14.5px;transform:scaleX(0.9175);-webkit-text-stroke:0.25px #222;">10 GiB</div>
<svg style="left:1236px;top:887.2px" width="14" height="10" viewBox="0 0 14 10"><path d="M0.500 5h12.500M8.600 0.800L13 5l-4.400 4.200" stroke="#222" stroke-width="1.250" fill="none"/></svg>
<div class="t" style="left:1265.25px;top:886px;font-size:14.5px;transform:scaleX(1.0071);color:#18b277;-webkit-text-stroke:0.25px #18b277;">20.5 MiB</div>
<div class="t" style="left:1431.15px;top:886px;font-size:14.5px;transform:scaleX(1.1008);-webkit-text-stroke:0.25px #222;">492 / 492</div>
<div class="t" style="left:1557.70px;top:886px;font-size:14.5px;transform:scaleX(1.1409);-webkit-text-stroke:0.25px #222;">production</div>
<svg style="left:1644.7px;top:889.2px" width="11" height="7" viewBox="0 0 11 7"><path d="M0.600 0.800l4.600 4.600 4.600-4.600" stroke="#333" stroke-width="1.100" fill="none"/></svg>
<div class="a" style="left:1789px;top:885.2px;width:34px;height:14px;border-radius:7px;background:#e6e6e6"></div>
<div class="a" style="left:1786px;top:882.2px;width:20px;height:20px;border-radius:10px;background:#c6c6c6;box-shadow:0 1px 2px rgba(0,0,0,.25)"></div>
<svg style="left:1853.500px;top:886.2px" width="3" height="12" viewBox="0 0 3 12" fill="#858585"><rect x="0.600" y="0.900" width="1.800" height="1.800"/><rect x="0.600" y="4.900" width="1.800" height="1.800"/><rect x="0.600" y="8.900" width="1.800" height="1.800"/></svg>
<div class="a" style="left:1811px;top:924px;width:64px;height:1px;background:#c4c4c4"></div>
<div class="a row" style="top:925px"></div>
<div class="a cb" style="left:284px;top:951px"></div>
<div class="t" style="left:357.98px;top:951px;font-size:14.5px;transform:scaleX(1.1930);">cert-manager/cert-manager</div>
<div class="t" style="left:789.00px;top:951px;font-size:14.5px;transform:scaleX(0.9933);color:#18b277;-webkit-text-stroke:0.25px #18b277;">$18,495</div>
<div class="t" style="left:963.53px;top:951px;font-size:14.5px;-webkit-text-stroke:0.25px #222;">4</div>
<svg style="left:998px;top:952.2px" width="14" height="10" viewBox="0 0 14 10"><path d="M0.500 5h12.500M8.600 0.800L13 5l-4.400 4.200" stroke="#222" stroke-width="1.250" fill="none"/></svg>
<div class="t" style="left:1031.08px;top:951px;font-size:14.5px;transform:scaleX(0.8917);color:#18b277;-webkit-text-stroke:0.25px #18b277;">0.01</div>
<div class="t" style="left:1178.05px;top:951px;font-size:14.5px;transform:scaleX(0.9300);-webkit-text-stroke:0.25px #222;">10 GiB</div>
<svg style="left:1224px;top:952.2px" width="14" height="10" viewBox="0 0 14 10"><path d="M0.500 5h12.500M8.600 0.800L13 5l-4.400 4.200" stroke="#222" stroke-width="1.250" fill="none"/></svg>
<div class="t" style="left:1253.03px;top:951px;font-size:14.5px;transform:scaleX(0.9413);color:#18b277;-webkit-text-stroke:0.25px #18b277;">31.6 MiB</div>
<div class="t" style="left:1431.17px;top:951px;font-size:14.5px;transform:scaleX(1.1019);-webkit-text-stroke:0.25px #222;">574 / 574</div>
<div class="t" style="left:1557.95px;top:951px;font-size:14.5px;transform:scaleX(1.1831);-webkit-text-stroke:0.25px #222;">high-availability</div>
<svg style="left:1684.5px;top:954.2px" width="11" height="7" viewBox="0 0 11 7"><path d="M0.600 0.800l4.600 4.600 4.600-4.600" stroke="#333" stroke-width="1.100" fill="none"/></svg>
<div class="a" style="left:1789px;top:950.2px;width:34px;height:14px;border-radius:7px;background:#e6e6e6"></div>
<div class="a" style="left:1786px;top:947.2px;width:20px;height:20px;border-radius:10px;background:#c6c6c6;box-shadow:0 1px 2px rgba(0,0,0,.25)"></div>
<svg style="left:1853.500px;top:951.2px" width="3" height="12" viewBox="0 0 3 12" fill="#858585"><rect x="0.600" y="0.900" width="1.800" height="1.800"/><rect x="0.600" y="4.900" width="1.800" height="1.800"/><rect x="0.600" y="8.900" width="1.800" height="1.800"/></svg>
<div class="a" style="left:1811px;top:989px;width:64px;height:1px;background:#c4c4c4"></div>
<div class="a row g" style="top:990px"></div>
<div class="a cb" style="left:284px;top:1016px"></div>
<svg style="left:337.700px;top:1015.9000000000001px" width="13" height="12" viewBox="0 0 13 12"><path d="M1.200 6.800l3.700 3.800L12.200 1.400" stroke="#38c98e" stroke-width="2" fill="none"/></svg>
<div class="t" style="left:358.34px;top:1016px;font-size:14.5px;transform:scaleX(1.1859);">default/nginx-tiny</div>
<div class="t" style="left:806.03px;top:1016px;font-size:14.5px;transform:scaleX(1.0627);-webkit-text-stroke:0.25px #222;">$0</div>
<div class="t" style="left:955.74px;top:1016px;font-size:14.5px;transform:scaleX(0.9007);-webkit-text-stroke:0.25px #222;">0.01</div>
<svg style="left:998px;top:1017.2px" width="14" height="10" viewBox="0 0 14 10"><path d="M0.500 5h12.500M8.600 0.800L13 5l-4.400 4.200" stroke="#222" stroke-width="1.250" fill="none"/></svg>
<div class="t" style="left:1031.08px;top:1016px;font-size:14.5px;transform:scaleX(0.8917);color:#18b277;-webkit-text-stroke:0.25px #18b277;">0.01</div>
<div class="t" style="left:1183.21px;top:1016px;font-size:14.5px;transform:scaleX(0.9478);-webkit-text-stroke:0.25px #222;">10 MiB</div>
<svg style="left:1239.5px;top:1017.2px" width="14" height="10" viewBox="0 0 14 10"><path d="M0.500 5h12.500M8.600 0.800L13 5l-4.400 4.200" stroke="#222" stroke-width="1.250" fill="none"/></svg>
<div class="t" style="left:1268.30px;top:1016px;font-size:14.5px;transform:scaleX(0.9565);color:#18b277;-webkit-text-stroke:0.25px #18b277;">10 MiB</div>
<div class="t" style="left:1433.99px;top:1016px;font-size:14.5px;transform:scaleX(0.9918);-webkit-text-stroke:0.25px #222;">601 / 601</div>
<div class="t" style="left:1557.72px;top:1016px;font-size:14.5px;transform:scaleX(1.1516);-webkit-text-stroke:0.25px #222;">dynamic</div>
<svg style="left:1627px;top:1019.2px" width="11" height="7" viewBox="0 0 11 7"><path d="M0.600 0.800l4.600 4.600 4.600-4.600" stroke="#333" stroke-width="1.100" fill="none"/></svg>
<div class="a" style="left:1789px;top:1015.2px;width:36px;height:14px;border-radius:7px;background:#8fdbb9"></div>
<div class="a" style="left:1806px;top:1012.2px;width:20px;height:20px;border-radius:10px;background:#12ad6d;box-shadow:0 1px 2px rgba(0,0,0,.3)"></div>
<svg style="left:1853.500px;top:1016.2px" width="3" height="12" viewBox="0 0 3 12" fill="#858585"><rect x="0.600" y="0.900" width="1.800" height="1.800"/><rect x="0.600" y="4.900" width="1.800" height="1.800"/><rect x="0.600" y="8.900" width="1.800" height="1.800"/></svg>
<div class="a" style="left:1811px;top:1054px;width:64px;height:1px;background:#c4c4c4"></div>
<div class="a row g" style="top:1055px"></div>
<div class="a cb" style="left:284px;top:1081px"></div>
<svg style="left:337.700px;top:1080.9px" width="13" height="12" viewBox="0 0 13 12"><path d="M1.200 6.800l3.700 3.800L12.200 1.400" stroke="#38c98e" stroke-width="2" fill="none"/></svg>
<div class="t" style="left:357.97px;top:1081px;font-size:14.5px;transform:scaleX(1.1817);">high-priority-workloads/ecom-store-front</div>
<div class="t" style="left:806.03px;top:1081px;font-size:14.5px;transform:scaleX(1.0627);-webkit-text-stroke:0.25px #222;">$0</div>
<div class="t" style="left:953.85px;top:1081px;font-size:14.5px;transform:scaleX(0.8689);-webkit-text-stroke:0.25px #222;">0.115</div>
<svg style="left:998px;top:1082.2px" width="14" height="10" viewBox="0 0 14 10"><path d="M0.500 5h12.500M8.600 0.800L13 5l-4.400 4.200" stroke="#222" stroke-width="1.250" fill="none"/></svg>
<div class="t" style="left:1028.96px;top:1081px;font-size:14.5px;transform:scaleX(0.8761);color:#18b277;-webkit-text-stroke:0.25px #18b277;">0.115</div>
<div class="t" style="left:1183.21px;top:1081px;font-size:14.5px;transform:scaleX(0.9478);-webkit-text-stroke:0.25px #222;">10 MiB</div>
<svg style="left:1239.5px;top:1082.2px" width="14" height="10" viewBox="0 0 14 10"><path d="M0.500 5h12.500M8.600 0.800L13 5l-4.400 4.200" stroke="#222" stroke-width="1.250" fill="none"/></svg>
<div class="t" style="left:1268.30px;top:1081px;font-size:14.5px;transform:scaleX(0.9565);color:#18b277;-webkit-text-stroke:0.25px #18b277;">10 MiB</div>
<div class="t" style="left:1430.93px;top:1081px;font-size:14.5px;transform:scaleX(1.0858);-webkit-text-stroke:0.25px #222;">382 / 382</div>
<div class="t" style="left:1557.72px;top:1081px;font-size:14.5px;transform:scaleX(1.1516);-webkit-text-stroke:0.25px #222;">dynamic</div>
<svg style="left:1627px;top:1084.2px" width="11" height="7" viewBox="0 0 11 7"><path d="M0.600 0.800l4.600 4.600 4.600-4.600" stroke="#333" stroke-width="1.100" fill="none"/></svg>
<div class="a" style="left:1789px;top:1080.2px;width:36px;height:14px;border-radius:7px;background:#8fdbb9"></div>
<div class="a" style="left:1806px;top:1077.2px;width:20px;height:20px;border-radius:10px;background:#12ad6d;box-shadow:0 1px 2px rgba(0,0,0,.3)"></div>
<svg style="left:1853.500px;top:1081.2px" width="3" height="12" viewBox="0 0 3 12" fill="#858585"><rect x="0.600" y="0.900" width="1.800" height="1.800"/><rect x="0.600" y="4.900" width="1.800" height="1.800"/><rect x="0.600" y="8.900" width="1.800" height="1.800"/></svg>
<div class="a" style="left:1811px;top:1119px;width:64px;height:1px;background:#c4c4c4"></div>
<div class="a row g" style="top:1120px"></div>
<div class="a cb" style="left:284px;top:1146px"></div>
<svg style="left:337.700px;top:1145.9px" width="13" height="12" viewBox="0 0 13 12"><path d="M1.200 6.800l3.700 3.800L12.200 1.400" stroke="#38c98e" stroke-width="2" fill="none"/></svg>
<div class="t" style="left:358.30px;top:1146px;font-size:14.5px;transform:scaleX(1.1792);">low-priority-workloads/best-effort</div>
<div class="t" style="left:806.03px;top:1146px;font-size:14.5px;transform:scaleX(1.0627);-webkit-text-stroke:0.25px #222;">$0</div>
<div class="t" style="left:953.50px;top:1146px;font-size:14.5px;transform:scaleX(1.0477);-webkit-text-stroke:0.25px #222;">0.02</div>
<svg style="left:998px;top:1147.2px" width="14" height="10" viewBox="0 0 14 10"><path d="M0.500 5h12.500M8.600 0.800L13 5l-4.400 4.200" stroke="#222" stroke-width="1.250" fill="none"/></svg>
<div class="t" style="left:1028.34px;top:1146px;font-size:14.5px;transform:scaleX(1.0576);color:#18b277;-webkit-text-stroke:0.25px #18b277;">0.02</div>
<div class="t" style="left:1180.30px;top:1146px;font-size:14.5px;transform:scaleX(1.0167);-webkit-text-stroke:0.25px #222;">20 MiB</div>
<svg style="left:1239.5px;top:1147.2px" width="14" height="10" viewBox="0 0 14 10"><path d="M0.500 5h12.500M8.600 0.800L13 5l-4.400 4.200" stroke="#222" stroke-width="1.250" fill="none"/></svg>
<div class="t" style="left:1268.30px;top:1146px;font-size:14.5px;transform:scaleX(1.0280);color:#18b277;-webkit-text-stroke:0.25px #18b277;">20 MiB</div>
<div class="t" style="left:1434.44px;top:1146px;font-size:14.5px;transform:scaleX(0.9804);-webkit-text-stroke:0.25px #222;">241 / 241</div>
<div class="t" style="left:1557.72px;top:1146px;font-size:14.5px;transform:scaleX(1.1516);-webkit-text-stroke:0.25px #222;">dynamic</div>
<svg style="left:1627px;top:1149.2px" width="11" height="7" viewBox="0 0 11 7"><path d="M0.600 0.800l4.600 4.600 4.600-4.600" stroke="#333" stroke-width="1.100" fill="none"/></svg>
<div class="a" style="left:1789px;top:1145.2px;width:36px;height:14px;border-radius:7px;background:#8fdbb9"></div>
<div class="a" style="left:1806px;top:1142.2px;width:20px;height:20px;border-radius:10px;background:#12ad6d;box-shadow:0 1px 2px rgba(0,0,0,.3)"></div>
<svg style="left:1853.500px;top:1146.2px" width="3" height="12" viewBox="0 0 3 12" fill="#858585"><rect x="0.600" y="0.900" width="1.800" height="1.800"/><rect x="0.600" y="4.900" width="1.800" height="1.800"/><rect x="0.600" y="8.900" width="1.800" height="1.800"/></svg>
<div class="a" style="left:1811px;top:1184px;width:64px;height:1px;background:#c4c4c4"></div>
</div>
</body></html>
